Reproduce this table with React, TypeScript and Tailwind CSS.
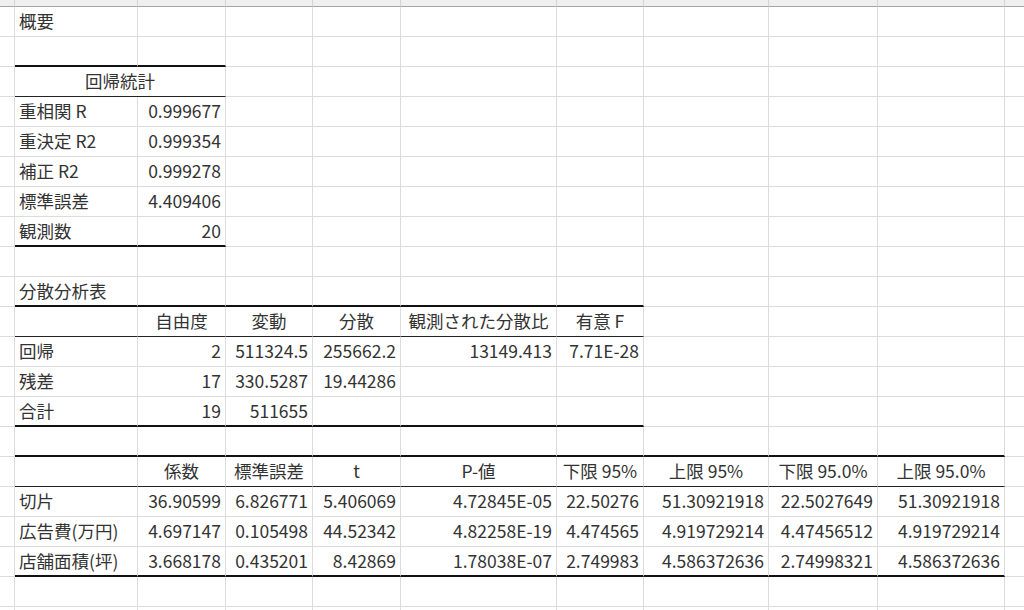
import clsx from 'clsx';

type Cell = { t?: string; a?: 'l' | 'r' | 'c'; span?: number };
type Row = { cells: Cell[]; line?: 'thick' | 'thin'; to?: number };

const L = (t: string): Cell => ({ t, a: 'l' });
const R = (t: string): Cell => ({ t, a: 'r' });
const C = (t: string): Cell => ({ t, a: 'c' });
const E: Cell = {};

// 9 data columns A..I
const rows: Row[] = [
  { cells: [L('概要')] },
  { cells: [], line: 'thick', to: 2 },
  { cells: [{ t: '回帰統計', a: 'c', span: 2 }], line: 'thin', to: 2 },
  { cells: [L('重相関 R'), R('0.999677')] },
  { cells: [L('重決定 R2'), R('0.999354')] },
  { cells: [L('補正 R2'), R('0.999278')] },
  { cells: [L('標準誤差'), R('4.409406')] },
  { cells: [L('観測数'), R('20')], line: 'thick', to: 2 },
  { cells: [] },
  { cells: [L('分散分析表')], line: 'thick', to: 6 },
  { cells: [E, C('自由度'), C('変動'), C('分散'), C('観測された分散比'), C('有意 F')], line: 'thin', to: 6 },
  { cells: [L('回帰'), R('2'), R('511324.5'), R('255662.2'), R('13149.413'), R('7.71E-28')] },
  { cells: [L('残差'), R('17'), R('330.5287'), R('19.44286')] },
  { cells: [L('合計'), R('19'), R('511655')], line: 'thick', to: 6 },
  { cells: [], line: 'thick', to: 9 },
  {
    cells: [E, C('係数'), C('標準誤差'), C('t'), C('P-値'), C('下限 95%'), C('上限 95%'), C('下限 95.0%'), C('上限 95.0%')],
    line: 'thin',
    to: 9,
  },
  { cells: [L('切片'), R('36.90599'), R('6.826771'), R('5.406069'), R('4.72845E-05'), R('22.50276'), R('51.30921918'), R('22.5027649'), R('51.30921918')] },
  { cells: [L('広告費(万円)'), R('4.697147'), R('0.105498'), R('44.52342'), R('4.82258E-19'), R('4.474565'), R('4.919729214'), R('4.47456512'), R('4.919729214')] },
  { cells: [L('店舗面積(坪)'), R('3.668178'), R('0.435201'), R('8.42869'), R('1.78038E-07'), R('2.749983'), R('4.586372636'), R('2.74998321'), R('4.586372636')], line: 'thick', to: 9 },
  { cells: [] },
  { cells: [] },
];

function bottom(row: Row, col: number) {
  if (row.line && col < (row.to ?? 0)) {
    return row.line === 'thick' ? 'border-b-2 border-b-[#111]' : 'border-b border-b-[#222]';
  }
  return 'border-b border-b-[#dcdcdc]';
}

function SheetRow({ row }: { row: Row }) {
  const out = [];
  let col = 0;
  let i = 0;
  while (col < 9) {
    const cell = row.cells[i] ?? E;
    const span = cell.span ?? 1;
    out.push(
      <div
        key={col}
        className={clsx(
          'h-[30px] flex items-center whitespace-nowrap border-r border-r-[#dcdcdc] px-[4px]',
          span === 2 && 'col-span-2',
          cell.a === 'r' && 'justify-end',
          cell.a === 'c' && 'justify-center',
          bottom(row, col),
        )}
      >
        {cell.t}
      </div>,
    );
    col += span;
    i++;
  }
  return (
    <>
      <div className="h-[30px] border-r border-b border-[#dcdcdc]" />
      {out}
      <div className="h-[30px] border-b border-[#dcdcdc]" />
    </>
  );
}

export default function App() {
  return (
    <div
      className="h-[610px] w-[1024px] overflow-hidden bg-white text-[17.5px] text-[#333]"
      style={{ fontFamily: '"Noto Sans CJK JP", "Noto Sans", sans-serif' }}
    >
      <div className="grid grid-cols-[15px_123px_88px_87px_88px_156px_87px_125px_109px_127px_1fr]">
        {/* column header strip, cut off at the top */}
        {Array.from({ length: 11 }).map((_, i) => (
          <div
            key={i}
            className={clsx('h-[7px] bg-[#efefef] border-b border-b-[#a6a6a6]', i < 10 && 'border-r border-r-[#d4d4d4]')}
          />
        ))}
        {rows.map((r, i) => (
          <SheetRow key={i} row={r} />
        ))}
      </div>
    </div>
  );
}
